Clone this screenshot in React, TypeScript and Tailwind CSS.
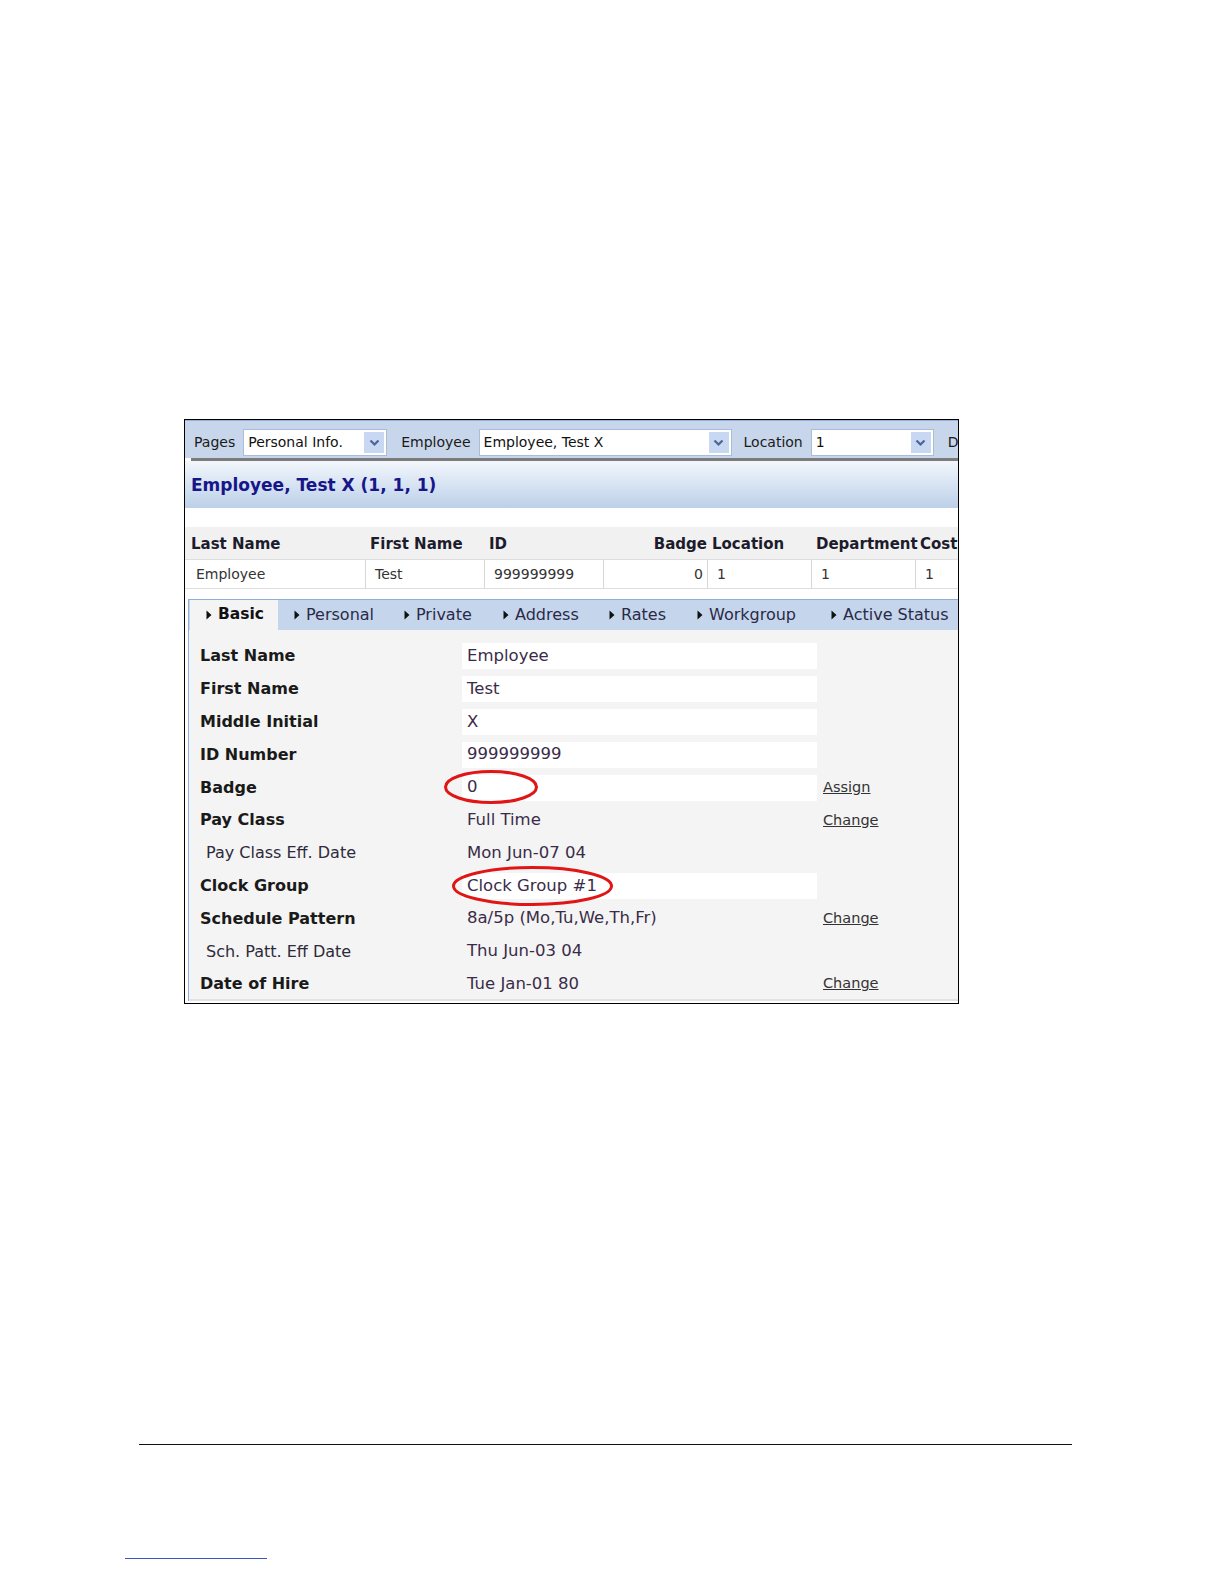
const FONT = { fontFamily: '"DejaVu Sans", Verdana, sans-serif' }

function Select({ value, width }: { value: string; width: string }) {
  return (
    <div className={`flex h-[27px] shrink-0 items-center border border-[#a9bcd8] bg-white pl-[4px] ${width}`}>
      <span className="flex-1 truncate text-[14px] text-[#111]">{value}</span>
      <span className="m-[2px] flex h-[21px] w-[20px] items-center justify-center bg-[#c8d8f2]">
        <svg width="11" height="8" viewBox="0 0 11 8">
          <path d="M1.5 1.5 L5.5 5.5 L9.5 1.5" fill="none" stroke="#4a6699" strokeWidth="2.2" />
        </svg>
      </span>
    </div>
  )
}

const COLS = [
  { head: 'Last Name', val: 'Employee', w: 'w-[179px]', right: false },
  { head: 'First Name', val: 'Test', w: 'w-[119px]', right: false },
  { head: 'ID', val: '999999999', w: 'w-[119px]', right: false },
  { head: 'Badge', val: '0', w: 'w-[104px]', right: true },
  { head: 'Location', val: '1', w: 'w-[104px]', right: false },
  { head: 'Department', val: '1', w: 'w-[104px]', right: false },
  { head: 'Cost', val: '1', w: 'w-[104px]', right: false },
]

const TABS = [
  { name: 'Basic', w: 'w-[88px]' },
  { name: 'Personal', w: 'w-[110px]' },
  { name: 'Private', w: 'w-[99px]' },
  { name: 'Address', w: 'w-[106px]' },
  { name: 'Rates', w: 'w-[88px]' },
  { name: 'Workgroup', w: 'w-[134px]' },
  { name: 'Active Status', w: 'w-[150px]' },
]

type Row = { label: string; value: string; sub?: boolean; box?: boolean; link?: string }

const ROWS: Row[] = [
  { label: 'Last Name', value: 'Employee', box: true },
  { label: 'First Name', value: 'Test', box: true },
  { label: 'Middle Initial', value: 'X', box: true },
  { label: 'ID Number', value: '999999999', box: true },
  { label: 'Badge', value: '0', box: true, link: 'Assign' },
  { label: 'Pay Class', value: 'Full Time', link: 'Change' },
  { label: 'Pay Class Eff. Date', value: 'Mon Jun-07 04', sub: true },
  { label: 'Clock Group', value: 'Clock Group #1', box: true },
  { label: 'Schedule Pattern', value: '8a/5p (Mo,Tu,We,Th,Fr)', link: 'Change' },
  { label: 'Sch. Patt. Eff Date', value: 'Thu Jun-03 04', sub: true },
  { label: 'Date of Hire', value: 'Tue Jan-01 80', link: 'Change' },
]

function Triangle() {
  return (
    <svg width="6" height="10" viewBox="0 0 6 10" className="mr-[6px] shrink-0">
      <path d="M0.5 0.5 L5.5 5 L0.5 9.5 Z" fill="#111" />
    </svg>
  )
}

export default function App() {
  return (
    <div className="h-[1584px] overflow-hidden bg-white" style={FONT}>
      <div className="pl-[184px] pt-[419px]">
        <div className="relative h-[585px] w-[775px] overflow-hidden border border-black bg-white">
          {/* toolbar */}
          <div className="flex h-[38px] items-center overflow-hidden whitespace-nowrap border-t border-[#93b2de] bg-[#c7d6ea] pl-[9px] pt-[6px] text-[14px] text-[#1a1a1a]">
            <span className="mr-[8px] shrink-0">Pages</span>
            <Select value="Personal Info." width="w-[144px]" />
            <span className="ml-[14px] mr-[8px] shrink-0">Employee</span>
            <Select value="Employee, Test X" width="w-[253px]" />
            <span className="ml-[12px] mr-[8px] shrink-0">Location</span>
            <Select value="1" width="w-[123px]" />
            <span className="ml-[14px] shrink-0">Department</span>
          </div>
          <div className="ml-[6px] h-[3px] bg-[#7c7c7c]" />

          {/* title band */}
          <div className="flex h-[47px] items-center bg-gradient-to-b from-[#f3f7fc] to-[#bcd0e9] pl-[6px] pt-[3px]">
            <span className="text-[17px] font-bold text-[#16168a]">Employee, Test X (1, 1, 1)</span>
          </div>

          <div className="h-[19px]" />

          {/* summary grid */}
          <div className="flex h-[32px] items-center whitespace-nowrap bg-[#f1f1f1] pl-[5px] pt-[2px] text-[15px] font-bold text-[#1c1c2c]">
            {COLS.map((c) => (
              <div key={c.head} className={`${c.w} shrink-0 ${c.right ? 'pr-[4px] text-right' : 'pl-[1px]'}`}>
                {c.head}
              </div>
            ))}
          </div>
          <div className="flex h-[30px] items-center whitespace-nowrap border-y border-[#dedede] pl-[2px] text-[14px] text-[#333]">
            {COLS.map((c) => (
              <div
                key={c.head}
                className={`flex h-full shrink-0 items-center border-r border-[#d6d6d6] ${c.w} ${c.right ? 'justify-end pr-[4px]' : 'pl-[9px]'}`}
              >
                {c.val}
              </div>
            ))}
          </div>

          <div className="h-[10px]" />

          {/* tabs */}
          <div className="ml-[3px] flex h-[31px] items-stretch overflow-hidden whitespace-nowrap border-t border-l border-[#8eaedc] bg-[#c5d6ec] pl-[1px] text-[16px] text-[#2a2a48]">
            {TABS.map((t, i) => (
              <div
                key={t.name}
                className={`flex shrink-0 items-center pl-[16px] ${t.w} ${i === 0 ? 'bg-[#f4f4f4] text-[15.5px] font-bold text-[#111]' : ''}`}
              >
                <Triangle />
                {t.name}
              </div>
            ))}
          </div>

          {/* form */}
          <div className="ml-[3px] h-[369px] border-l border-[#8eaedc] bg-[#f4f4f4] pt-[10px]">
            {ROWS.map((r) => (
              <div key={r.label} className="flex h-[32.8px] items-center whitespace-nowrap">
                <div
                  className={`w-[273px] shrink-0 ${r.sub ? 'pl-[17px] text-[16px] text-[#2e2a3a]' : 'pl-[11px] text-[16px] font-bold text-[#1a1a1a]'}`}
                >
                  {r.label}
                </div>
                <div
                  className={`flex h-[26px] w-[355px] shrink-0 items-center pl-[5px] text-[16.5px] text-[#3a2c48] ${r.box ? 'bg-white' : ''}`}
                >
                  {r.value}
                </div>
                {r.link && (
                  <span className="ml-[6px] text-[14.5px] text-[#333] underline">{r.link}</span>
                )}
              </div>
            ))}
          </div>
          <div className="ml-[3px] h-[2px] border-l border-[#8eaedc] bg-[#e2e2e2]" />

          {/* annotations */}
          <svg className="absolute left-[258px] top-[349px]" width="96" height="36" viewBox="0 0 96 36">
            <ellipse cx="48" cy="18" rx="45.5" ry="15.5" fill="none" stroke="#e01515" strokeWidth="3" />
          </svg>
          <svg className="absolute left-[266px] top-[445px]" width="163" height="42" viewBox="0 0 163 42">
            <ellipse cx="81.5" cy="21" rx="79" ry="18.5" fill="none" stroke="#e01515" strokeWidth="3" />
          </svg>
        </div>
      </div>

      <div className="ml-[139px] mt-[440px] h-px w-[933px] bg-[#111]" />
      <div className="ml-[125px] mt-[113px] h-px w-[142px] bg-[#3b56c4]" />
    </div>
  )
}
